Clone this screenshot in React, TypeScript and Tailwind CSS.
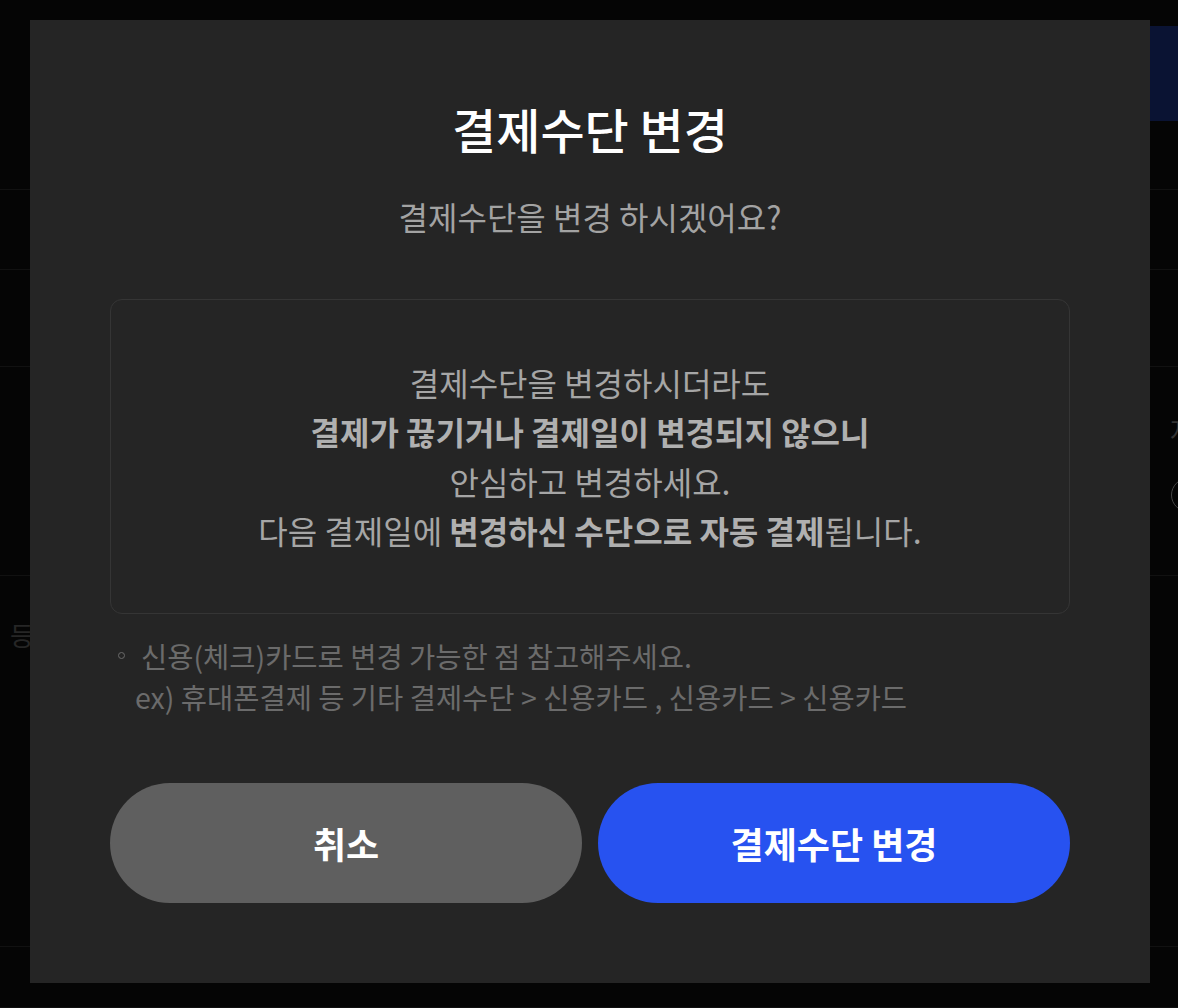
import React from "react";

const font = { fontFamily: '"Noto Sans CJK KR", "Noto Sans", sans-serif' };

// rows of the page sitting behind the dialog (dimmed by the backdrop)
const rows = [
  { h: "h-[190px]" },
  { h: "h-[80px]" },
  { h: "h-[97px]" },
  { h: "h-[209px]" },
  { h: "h-[371px]" },
  { h: "h-[61px]" },
];

const PageBehind: React.FC = () => (
  <div className="absolute inset-0 bg-[#050505]">
    {rows.map((r, i) => (
      <div key={i} className={`${r.h} border-b border-[#111111]`} />
    ))}
    <div className="absolute right-0 top-[26px] w-[120px] h-[95px] bg-[#0a1333] flex items-center pl-[20px] text-[30px] text-[#3a3f4f]">
      이용
    </div>
    <div className="absolute left-[10px] top-[615px] text-[26px] text-[#262626]">등</div>
    <div className="absolute left-[1170px] top-[410px] text-[26px] text-[#333333]">자</div>
    <div className="absolute left-[1171px] top-[478px] w-[34px] h-[34px] rounded-full border border-[#444444]" />
  </div>
);

const ChangePaymentDialog: React.FC = () => (
  <div className="absolute left-[30px] top-[20px] w-[1120px] h-[963px] bg-[#252525] px-[80px] pt-[79px] flex flex-col">
    <h1 className="text-center text-[48px] leading-[58px] font-medium text-white">
      결제수단 변경
    </h1>
    <p className="mt-[39px] text-center text-[32px] leading-[40px] text-[#a3a3a3]">
      결제수단을 변경 하시겠어요?
    </p>

    <div className="mt-[63px] h-[315px] rounded-[12px] border border-[#353535] flex flex-col items-center justify-center text-[32px] leading-[49.5px] text-[#a6a6a6]">
      <p>결제수단을 변경하시더라도</p>
      <p className="font-bold text-[#b0b0b0]">결제가 끊기거나 결제일이 변경되지 않으니</p>
      <p>안심하고 변경하세요.</p>
      <p>
        다음 결제일에 <span className="font-bold text-[#b0b0b0]">변경하신 수단으로 자동 결제</span>됩니다.
      </p>
    </div>

    <div className="mt-[21px] text-[28.5px] leading-[41px] text-[#6b6b6b]">
      <div className="flex items-center">
        <span className="ml-[8px] w-[7px] h-[7px] rounded-full border border-[#6b6b6b]" />
        <span className="ml-[16px]">신용(체크)카드로 변경 가능한 점 참고해주세요.</span>
      </div>
      <p className="pl-[25px]">ex) 휴대폰결제 등 기타 결제수단 &gt; 신용카드 , 신용카드 &gt; 신용카드</p>
    </div>

    <div className="mt-[66px] flex gap-[16px]">
      <button className="flex-1 h-[120px] rounded-full bg-[#5f5f5f] text-white text-[36px] font-bold">
        취소
      </button>
      <button className="flex-1 h-[120px] rounded-full bg-[#2752f0] text-white text-[36px] font-bold">
        결제수단 변경
      </button>
    </div>
  </div>
);

export default function App() {
  return (
    <div className="relative w-[1178px] h-[1008px] overflow-hidden" style={font}>
      <PageBehind />
      <ChangePaymentDialog />
    </div>
  );
}
